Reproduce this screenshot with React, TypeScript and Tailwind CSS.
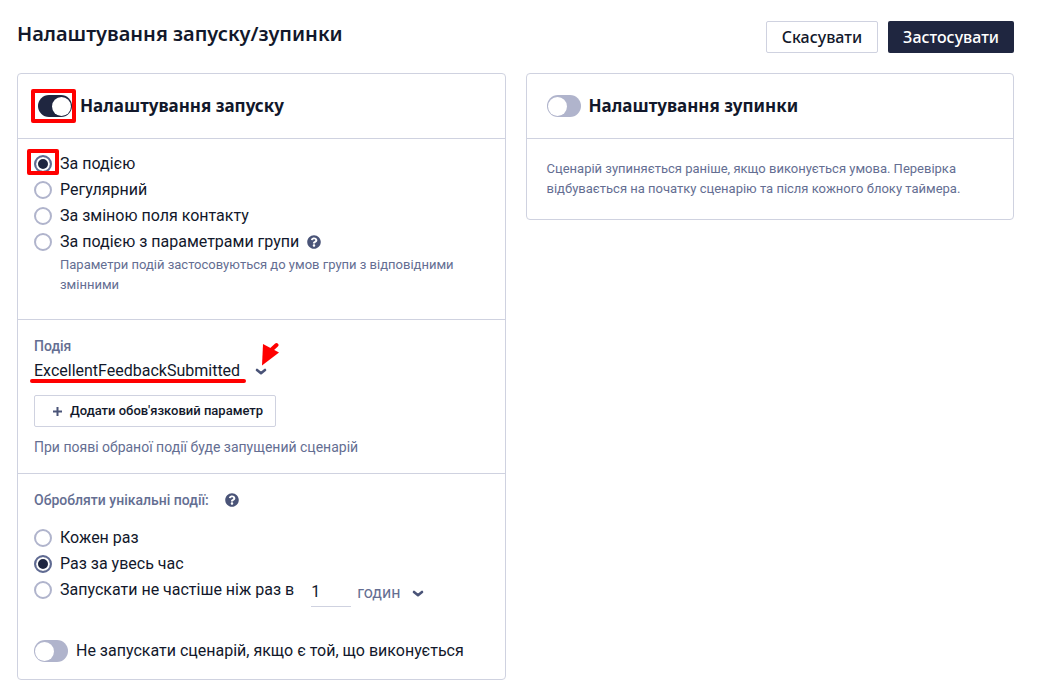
import { useState, type ReactNode } from "react";
import { FaQuestionCircle } from "react-icons/fa";

const TRIGGERS = [
  { value: "event", label: "За подією" },
  { value: "regular", label: "Регулярний" },
  { value: "field", label: "За зміною поля контакту" },
  { value: "group", label: "За подією з параметрами групи" },
];

function ChevronIcon() {
  return (
    <svg
      className="pointer-events-none absolute right-0 top-1/2 h-2 w-3 -translate-y-1/2 text-[#4a5478]"
      viewBox="0 0 12 8"
      fill="none"
      stroke="currentColor"
      strokeWidth="2.6"
      strokeLinecap="round"
      strokeLinejoin="round"
      aria-hidden="true"
    >
      <path d="M2 3 6 6.2 10 3" />
    </svg>
  );
}

function HelpButton({ label }: { label: string }) {
  return (
    <button type="button" aria-label={label} className="shrink-0 text-[#4a5478]">
      <FaQuestionCircle className="size-3.5" />
    </button>
  );
}

interface ToggleProps {
  id: string;
  checked: boolean;
  onChange: (checked: boolean) => void;
}

function Toggle({ id, checked, onChange }: ToggleProps) {
  return (
    <input
      id={id}
      type="checkbox"
      role="switch"
      checked={checked}
      onChange={(e) => onChange(e.target.checked)}
      className="flex h-[22px] w-[34px] shrink-0 cursor-pointer appearance-none items-center rounded-full bg-[#b0b4cc] px-px before:size-[19px] before:rounded-full before:bg-white checked:justify-end checked:bg-[#1f2640]"
    />
  );
}

interface RadioProps {
  name: string;
  checked: boolean;
  onSelect: () => void;
  marked?: boolean;
  children: ReactNode;
}

function Radio({ name, checked, onSelect, marked, children }: RadioProps) {
  return (
    <label className="flex cursor-pointer items-center gap-2 leading-[26px]">
      <span className="relative flex">
        <input
          type="radio"
          name={name}
          checked={checked}
          onChange={onSelect}
          className="size-[18px] cursor-pointer appearance-none rounded-full border-2 border-[#b0b4cc] bg-white bg-clip-padding checked:border-[#5f6a92] checked:bg-[#1f2640] checked:shadow-[inset_0_0_0_2px_white]"
        />
        {marked && (
          <span className="pointer-events-none absolute -bottom-0.5 -left-[7px] -right-[7px] -top-1.5 rounded-xs border-4 border-[#ff0000]" />
        )}
      </span>
      {children}
    </label>
  );
}

export default function App() {
  const [startOn, setStartOn] = useState(true);
  const [stopOn, setStopOn] = useState(false);
  const [skipRunning, setSkipRunning] = useState(false);
  const [trigger, setTrigger] = useState("event");
  const [repeat, setRepeat] = useState("once");
  const [hours, setHours] = useState("1");

  return (
    <main className="min-h-screen bg-white pb-3 pl-[17px] pr-[26px] pt-[21px] font-['Roboto',sans-serif] text-base text-[#12182b]">
      <header className="mb-5 flex items-start justify-between">
        <h1 className="font-['Noto_Sans',sans-serif] text-xl font-semibold leading-[26px]">
          Налаштування запуску/зупинки
        </h1>
        <div className="flex gap-2.5 font-['Noto_Sans',sans-serif] text-base font-medium">
          <button type="button" className="h-8 rounded-xs border border-[#cfd2e0] px-[15px]">
            Скасувати
          </button>
          <button type="button" className="h-8 rounded-xs bg-[#1f2640] px-[15px] text-white">
            Застосувати
          </button>
        </div>
      </header>

      <div className="grid grid-cols-2 items-start gap-5">
        <section className="rounded-sm border border-[#cfd2e0]">
          <div className="flex h-16 items-center gap-2 px-5">
            <span className="relative flex">
              <Toggle id="start" checked={startOn} onChange={setStartOn} />
              <span className="pointer-events-none absolute -bottom-1.5 -left-[7px] -right-1 -top-1.5 rounded-xs border-4 border-[#ff0000]" />
            </span>
            <label htmlFor="start" className="font-['Noto_Sans',sans-serif] text-[17px] font-bold">
              Налаштування запуску
            </label>
          </div>

          <div className="border-t border-[#cfd2e0] px-4 pb-6 pt-3">
            {TRIGGERS.map((item) => (
              <div key={item.value} className="flex items-center gap-2">
                <Radio
                  name="trigger"
                  checked={trigger === item.value}
                  onSelect={() => setTrigger(item.value)}
                  marked={item.value === "event"}
                >
                  {item.label}
                </Radio>
                {item.value === "group" && <HelpButton label="Параметри групи" />}
              </div>
            ))}
            <p className="pl-[26px] text-[13px] leading-5 text-[#646e92]">
              Параметри подій застосовуються до умов групи з відповідними змінними
            </p>
          </div>

          <div className="border-t border-[#cfd2e0] p-4">
            <label htmlFor="event" className="block text-sm font-medium leading-5 text-[#646e92]">
              Подія
            </label>
            <div className="relative w-[233px]">
              <select id="event" className="block h-[30px] w-full appearance-none bg-transparent pr-5">
                <option>ExcellentFeedbackSubmitted</option>
              </select>
              <ChevronIcon />
              <span className="pointer-events-none absolute -left-1 top-[23px] h-1 w-54 rounded-full bg-[#ff0000]" />
              <svg
                className="pointer-events-none absolute -right-3 -top-3.5 h-6 w-[18px]"
                viewBox="0 0 18 24"
                aria-hidden="true"
              >
                <path d="M2 2 18 10.5 1 23.5Z" fill="#ff0000" />
                <path d="M9 9 15.5 3" stroke="#ff0000" strokeWidth="4" strokeLinecap="round" />
              </svg>
            </div>
            <button
              type="button"
              className="mt-[9px] flex h-8 items-center gap-2 rounded-xs border border-[#cfd2e0] pl-[18px] pr-3 text-[13px] font-medium"
            >
              <svg className="size-[9px]" viewBox="0 0 9 9" stroke="#4a5478" strokeWidth="2" aria-hidden="true">
                <path d="M4.5 0v9M0 4.5h9" />
              </svg>
              Додати обов'язковий параметр
            </button>
            <p className="mt-2.5 text-sm leading-5 text-[#646e92]">
              При появі обраної події буде запущений сценарій
            </p>
          </div>

          <div className="border-t border-[#cfd2e0] px-4 pb-4 pt-4">
            <div className="mb-[15px] flex items-center gap-4 text-sm font-medium leading-5 text-[#646e92]">
              Обробляти унікальні події:
              <HelpButton label="Унікальні події" />
            </div>
            <Radio name="repeat" checked={repeat === "always"} onSelect={() => setRepeat("always")}>
              Кожен раз
            </Radio>
            <Radio name="repeat" checked={repeat === "once"} onSelect={() => setRepeat("once")}>
              Раз за увесь час
            </Radio>
            <div className="flex items-start">
              <Radio name="repeat" checked={repeat === "limit"} onSelect={() => setRepeat("limit")}>
                Запускати не частіше ніж раз в
              </Radio>
              <input
                type="text"
                aria-label="Кількість"
                value={hours}
                onChange={(e) => setHours(e.target.value)}
                className="ml-[17px] h-[30px] w-10 border-b border-[#cfd2e0]"
              />
              <div className="relative ml-1.5 w-[67px]">
                <select
                  aria-label="Одиниця часу"
                  className="block h-8 w-full appearance-none bg-transparent pr-4 text-[#646e92]"
                >
                  <option>годин</option>
                </select>
                <ChevronIcon />
              </div>
            </div>
            <div className="mt-[30px] flex items-center gap-2">
              <Toggle id="skip" checked={skipRunning} onChange={setSkipRunning} />
              <label htmlFor="skip" className="leading-6">
                Не запускати сценарій, якщо є той, що виконується
              </label>
            </div>
          </div>
        </section>

        <section className="rounded-sm border border-[#cfd2e0]">
          <div className="flex h-16 items-center gap-2 px-5">
            <Toggle id="stop" checked={stopOn} onChange={setStopOn} />
            <label htmlFor="stop" className="font-['Noto_Sans',sans-serif] text-[17px] font-bold">
              Налаштування зупинки
            </label>
          </div>
          <p className="border-t border-[#cfd2e0] p-5 text-[13px] leading-5 text-[#646e92]">
            Сценарій зупиняється раніше, якщо виконується умова. Перевірка відбувається на початку сценарію та
            після кожного блоку таймера.
          </p>
        </section>
      </div>
    </main>
  );
}
